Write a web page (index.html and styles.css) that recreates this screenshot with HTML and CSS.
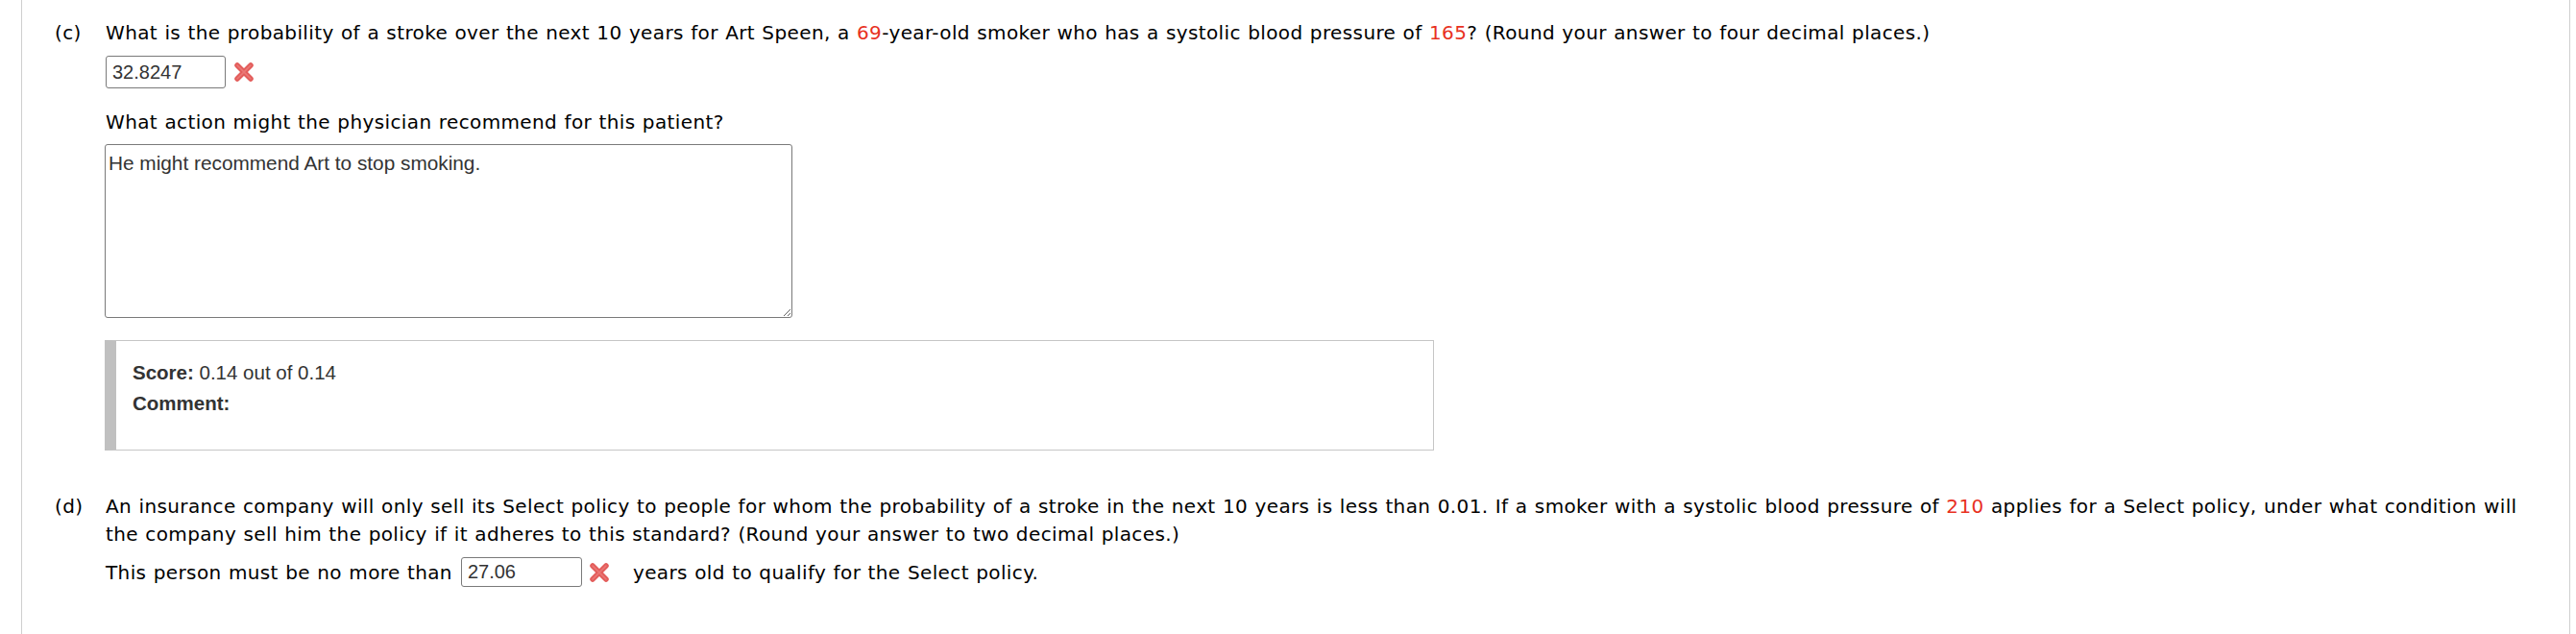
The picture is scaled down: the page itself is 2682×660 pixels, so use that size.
FILE: index.html
```html
<!DOCTYPE html>
<html>
<head>
<meta charset="utf-8">
<link rel="stylesheet" href="styles.css">
</head>
<body>
<div class="page">
  <div class="q q-c">
    <div class="q-label">(c)</div>
    <div class="q-body">
      <div class="line">What is the probability of a stroke over the next 10 years for Art Speen, a <span class="num">69</span>-year-old smoker who has a systolic blood pressure of <span class="num">165</span>? (Round your answer to four decimal places.)</div>
      <div class="answer-row first-row">
        <span class="ans ans-tall">32.8247</span>
        <svg class="xmark" viewBox="0 0 22 20" width="22" height="20"><path d="M4 3 L18 17 M18 3 L4 17" stroke="#e35d5b" stroke-width="5.5" stroke-linecap="round"/><path d="M4 3 L18 17 M18 3 L4 17" stroke="#f08a88" stroke-width="1.6" stroke-linecap="round" opacity="0.6"/></svg>
      </div>
      <div class="line prompt">What action might the physician recommend for this patient?</div>
      <textarea class="essay">He might recommend Art to stop smoking.</textarea>
      <div class="score-box">
        <div class="score-line"><b>Score:</b> 0.14 out of 0.14</div>
        <div class="score-line"><b>Comment:</b></div>
      </div>
    </div>
  </div>
  <div class="q q-d">
    <div class="q-label">(d)</div>
    <div class="q-body">
      <div class="line">An insurance company will only sell its Select policy to people for whom the probability of a stroke in the next 10 years is less than 0.01. If a smoker with a systolic blood pressure of <span class="num">210</span> applies for a Select policy, under what condition will the company sell him the policy if it adheres to this standard? (Round your answer to two decimal places.)</div>
      <div class="answer-row inline-row">
        <span class="lead">This person must be no more than</span>
        <span class="ans ans-short">27.06</span>
        <svg class="xmark" viewBox="0 0 22 20" width="22" height="20"><path d="M4 3 L18 17 M18 3 L4 17" stroke="#e35d5b" stroke-width="5.5" stroke-linecap="round"/><path d="M4 3 L18 17 M18 3 L4 17" stroke="#f08a88" stroke-width="1.6" stroke-linecap="round" opacity="0.6"/></svg>
        <span class="trail">years old to qualify for the Select policy.</span>
      </div>
    </div>
  </div>
</div>
</body>
</html>
```

FILE: styles.css
```css
html, body {
  margin: 0;
  padding: 0;
  background: #fff;
}
body {
  font-family: Verdana, "DejaVu Sans", sans-serif;
  font-size: 20px;
  letter-spacing: 0.38px;
  word-spacing: 0.6px;
  color: #000;
}
.page {
  margin: 0 6px 0 22px;
  border-left: 1px solid #cfcfcf;
  border-right: 1px solid #cfcfcf;
  min-height: 660px;
  box-sizing: border-box;
  padding: 20px 30px 0 34px;
}
.q {
  display: flex;
}
.q-label {
  flex: none;
  width: 53px;
  line-height: 29px;
}
.q-body {
  flex: 1;
  min-width: 0;
}
.line {
  line-height: 29px;
}
.num {
  color: #e8311f;
}
.answer-row {
  display: flex;
  align-items: center;
}
.first-row {
  margin-top: 9px;
}
.ans {
  display: inline-flex;
  align-items: center;
  box-sizing: border-box;
  border: 1px solid #7a7a7a;
  border-radius: 3px;
  padding: 0 6px;
  font-family: Arial, "Liberation Sans", sans-serif;
  font-size: 20px;
  letter-spacing: 0;
  word-spacing: 0;
  color: #333;
  background: #fff;
}
.ans-tall {
  width: 125px;
  height: 34px;
}
.ans-short {
  width: 126px;
  height: 31px;
}
.xmark {
  flex: none;
  margin-left: 8px;
}
.prompt {
  margin-top: 21px;
}
.essay {
  display: block;
  box-sizing: border-box;
  width: 716px;
  height: 181px;
  margin: 8px 0 0 -1px;
  padding: 7px 3px;
  border: 1px solid #7a7a7a;
  border-radius: 3px;
  font-family: Arial, "Liberation Sans", sans-serif;
  font-size: 20.8px;
  letter-spacing: 0;
  word-spacing: 0;
  color: #333;
  resize: both;
}
.score-box {
  box-sizing: border-box;
  width: 1384px;
  height: 115px;
  margin: 23px 0 0 -1px;
  border: 1px solid #c6c6c6;
  border-left: 12px solid #c0c0c0;
  padding: 17px 0 0 17px;
  font-family: Arial, "Liberation Sans", sans-serif;
  font-size: 20.5px;
  letter-spacing: 0;
  word-spacing: 0;
  color: #333;
}
.score-line {
  line-height: 32px;
}
.q-d {
  margin-top: 44px;
}
.inline-row {
  margin-top: 9px;
}
.lead {
  margin-right: 9px;
}
.inline-row .xmark {
  margin-left: 7px;
}
.trail {
  margin-left: 24px;
}
```
